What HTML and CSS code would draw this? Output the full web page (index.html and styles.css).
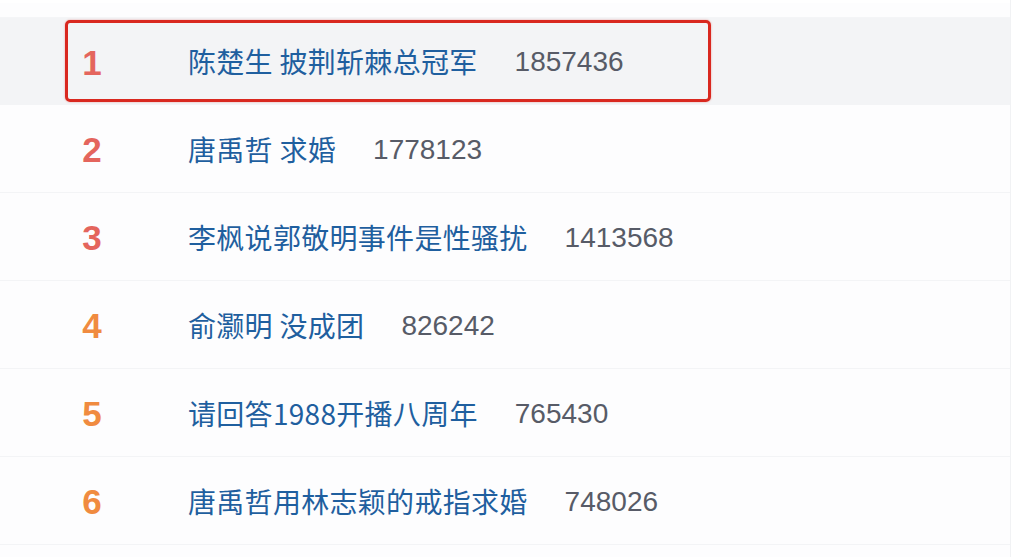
FILE: index.html
```html
<!DOCTYPE html>
<html lang="zh-CN">
<head>
<meta charset="utf-8">
<title>热搜榜</title>
<link rel="stylesheet" href="styles.css">
</head>
<body>
<div class="page">
  <div class="topline"></div>
  <ul class="list">
    <li class="row active">
      <span class="rank hot">1</span>
      <a class="title">陈楚生 披荆斩棘总冠军</a>
      <span class="count">1857436</span>
      <span class="mark"></span>
    </li>
    <li class="row">
      <span class="rank hot">2</span>
      <a class="title">唐禹哲 求婚</a>
      <span class="count">1778123</span>
    </li>
    <li class="row">
      <span class="rank hot">3</span>
      <a class="title">李枫说郭敬明事件是性骚扰</a>
      <span class="count">1413568</span>
    </li>
    <li class="row">
      <span class="rank warm">4</span>
      <a class="title">俞灏明 没成团</a>
      <span class="count">826242</span>
    </li>
    <li class="row">
      <span class="rank warm">5</span>
      <a class="title">请回答1988开播八周年</a>
      <span class="count">765430</span>
    </li>
    <li class="row">
      <span class="rank warm">6</span>
      <a class="title">唐禹哲用林志颖的戒指求婚</a>
      <span class="count">748026</span>
    </li>
  </ul>
</div>
</body>
</html>
```

FILE: styles.css
```css
* { box-sizing: border-box; }
html, body {
  margin: 0;
  padding: 0;
  background: #ffffff;
}
body {
  font-family: "Liberation Sans", "Noto Sans CJK SC", sans-serif;
  width: 1016px;
  height: 557px;
  overflow: hidden;
}
.page {
  width: 1011px;
  height: 557px;
  border-right: 1px solid #f1f2f4;
  background: #fdfdfe;
}
.topline {
  height: 18px;
  border-top: 3px solid #ffffff;
  border-bottom: 1px solid #f4f5f7;
  background: #fdfdfe;
}
.list {
  list-style: none;
  margin: 0;
  padding: 0;
}
.row {
  position: relative;
  display: flex;
  align-items: center;
  height: 88px;
  padding-left: 72px;
  border-bottom: 1px solid #f3f4f6;
}
.row.active {
  height: 87px;
  background: #f3f4f6;
}
.rank {
  width: 40px;
  text-align: center;
  font-size: 35px;
  font-weight: bold;
  line-height: 1;
  padding-top: 2px;
}
.rank.hot { color: #e4655d; }
.rank.warm { color: #f08b40; }
.title {
  margin-left: 76px;
  font-family: "Noto Sans CJK SC", sans-serif;
  font-size: 28px;
  color: #1f5f9f;
  letter-spacing: 0.3px;
  text-decoration: none;
}
.count {
  margin-left: 37px;
  font-size: 28px;
  color: #575b67;
  padding-top: 2px;
}
.mark {
  position: absolute;
  left: 65px;
  top: 2px;
  width: 646px;
  height: 82px;
  border: 3px solid #d9281f;
  border-radius: 5px;
  box-shadow: 0 0 2px rgba(217, 40, 31, 0.45);
}
```
